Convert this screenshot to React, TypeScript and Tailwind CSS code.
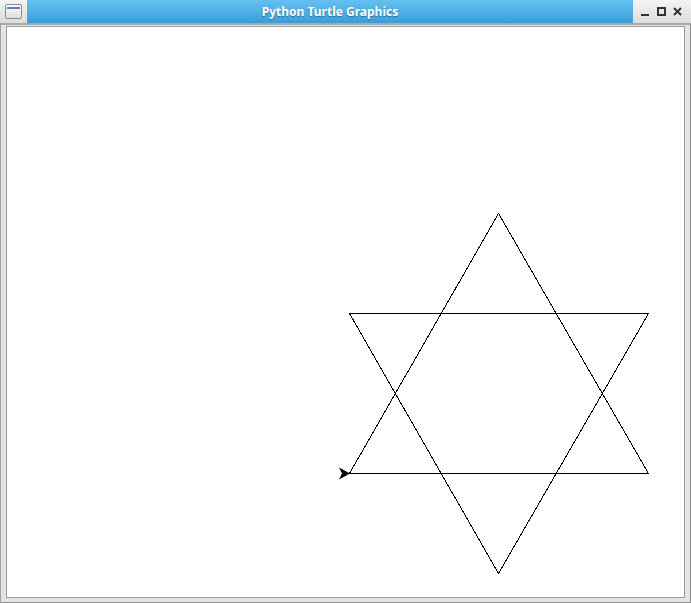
function WindowIcon() {
  return (
    <div className="flex h-[23px] w-[27px] items-center justify-center bg-gradient-to-b from-[#f4f4f4] to-[#dcdcdc]">
      <div className="h-[15px] w-[17px] rounded-[2px] border border-[#8a8a8a] bg-gradient-to-b from-[#fafafa] to-[#dedede]">
        <div className="mx-[1px] mt-[2px] h-[2px] bg-[#5a7fb8]" />
      </div>
    </div>
  );
}

function Controls() {
  return (
    <div className="flex h-[23px] w-[58px] items-center justify-end gap-[7px] bg-gradient-to-b from-[#f4f4f4] to-[#dcdcdc] pr-[9px]">
      <svg width="9" height="9" viewBox="0 0 9 9" aria-hidden="true">
        <rect x="0" y="7" width="8" height="2" fill="#333" />
      </svg>
      <svg width="9" height="9" viewBox="0 0 9 9" aria-hidden="true">
        <rect x="1" y="1" width="7" height="7" fill="none" stroke="#333" strokeWidth="2" />
      </svg>
      <svg width="9" height="9" viewBox="0 0 9 9" aria-hidden="true">
        <path d="M1 1l7 7M8 1L1 8" stroke="#333" strokeWidth="2" />
      </svg>
    </div>
  );
}

function Drawing() {
  return (
    <svg
      className="block h-full w-full"
      viewBox="8 28 675 568"
      shapeRendering="crispEdges"
      aria-hidden="true"
    >
      <path
        d="M498.5 213.5L648.5 473.5H349.5Z"
        fill="none"
        stroke="#000"
        strokeWidth="1"
      />
      <path
        d="M349.5 313.5H648.5L498.5 573.5Z"
        fill="none"
        stroke="#000"
        strokeWidth="1"
      />
      <path d="M350 473.5L339 467.5L342 473.5L339 479.5Z" fill="#000" shapeRendering="auto" />
    </svg>
  );
}

export default function App() {
  return (
    <div className="flex h-[603px] w-[691px] flex-col bg-[#e6e6e6] font-['Noto_Sans',sans-serif]">
      <div className="flex h-[23px] shrink-0">
        <WindowIcon />
        <div className="flex flex-1 items-center justify-center bg-gradient-to-b from-[#64c0f0] to-[#389ddc]">
          <span className="text-[12px] font-bold leading-none text-white [text-shadow:0_1px_1px_rgba(0,0,0,0.35)]">
            Python Turtle Graphics
          </span>
        </div>
        <Controls />
      </div>
      <div className="h-[2px] shrink-0 bg-[#a8a8a8]" />
      <div className="flex flex-1 flex-col border-x border-b border-[#8c8c8c] border-l-[#a0a0a0] bg-[#e4e4e4] px-[5px] pb-[4px] pt-[1px]">
        <div className="flex-1 border border-[#9a9a9a] bg-white p-px">
          <Drawing />
        </div>
      </div>
    </div>
  );
}
